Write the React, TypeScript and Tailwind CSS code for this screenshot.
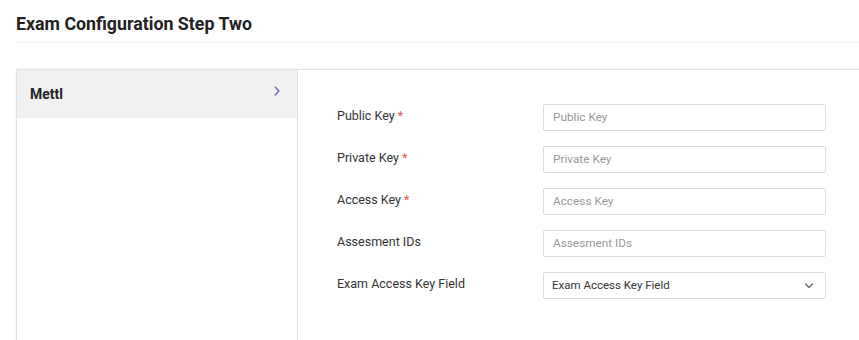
import React from "react";

const fields = [
  { label: "Public Key", req: true },
  { label: "Private Key", req: true },
  { label: "Access Key", req: true },
  { label: "Assesment IDs", req: false },
];

export default function App() {
  return (
    <div className="h-[340px] w-[859px] overflow-hidden bg-white pl-4 pt-[12px]" style={{ fontFamily: "Roboto, 'Liberation Sans', sans-serif" }}>
      <h1 className="text-[17.8px] font-bold leading-[24px] text-[#222]">Exam Configuration Step Two</h1>
      <div className="mt-[6px] h-px bg-[#f2f2f2]" />
      <div className="mt-[26px] flex h-[300px] border-l border-t border-[#e0e0e0] shadow-[0_0_2px_rgba(0,0,0,0.08)]">
        <div className="w-[281px] shrink-0 border-r border-[#e3e3e3]">
          <div className="flex h-[48px] items-center justify-between bg-[#f1f1f1] pl-[13px] pr-[16px]">
            <span className="text-[14px] font-bold text-[#222]">Mettl</span>
            <svg width="8" height="12" viewBox="0 0 8 12" fill="none" className="mb-[6px]">
              <path d="M2.2 2 L5.8 6 L2.2 10" stroke="#6a6aa8" strokeWidth="1.4" strokeLinecap="round" strokeLinejoin="round" />
            </svg>
          </div>
        </div>
        <div className="flex flex-col gap-[15px] pl-[39px] pt-[34px]">
          {fields.map((f) => (
            <div key={f.label} className="flex">
              <div className="w-[206px] pt-[3px] text-[12.5px] leading-[17px] text-[#333]">
                {f.label}
                {f.req && <span className="ml-[3px] text-[#e05555]">*</span>}
              </div>
              <div className="flex h-[27px] w-[283px] items-center rounded-[2px] border border-[#dcdcdc] px-[9px] text-[11.8px] text-[#999]">
                {f.label}
              </div>
            </div>
          ))}
          <div className="flex">
            <div className="w-[206px] pt-[3px] text-[12.5px] leading-[17px] text-[#333]">Exam Access Key Field</div>
            <div className="flex h-[27px] w-[283px] items-center justify-between rounded-[2px] border border-[#dcdcdc] pl-[8px] pr-[11px] text-[11.5px] text-[#333]">
              <span>Exam Access Key Field</span>
              <svg width="10" height="6" viewBox="0 0 10 6" fill="none">
                <path d="M1.5 1 L5 4.5 L8.5 1" stroke="#666" strokeWidth="1.2" strokeLinecap="round" strokeLinejoin="round" />
              </svg>
            </div>
          </div>
        </div>
      </div>
    </div>
  );
}
